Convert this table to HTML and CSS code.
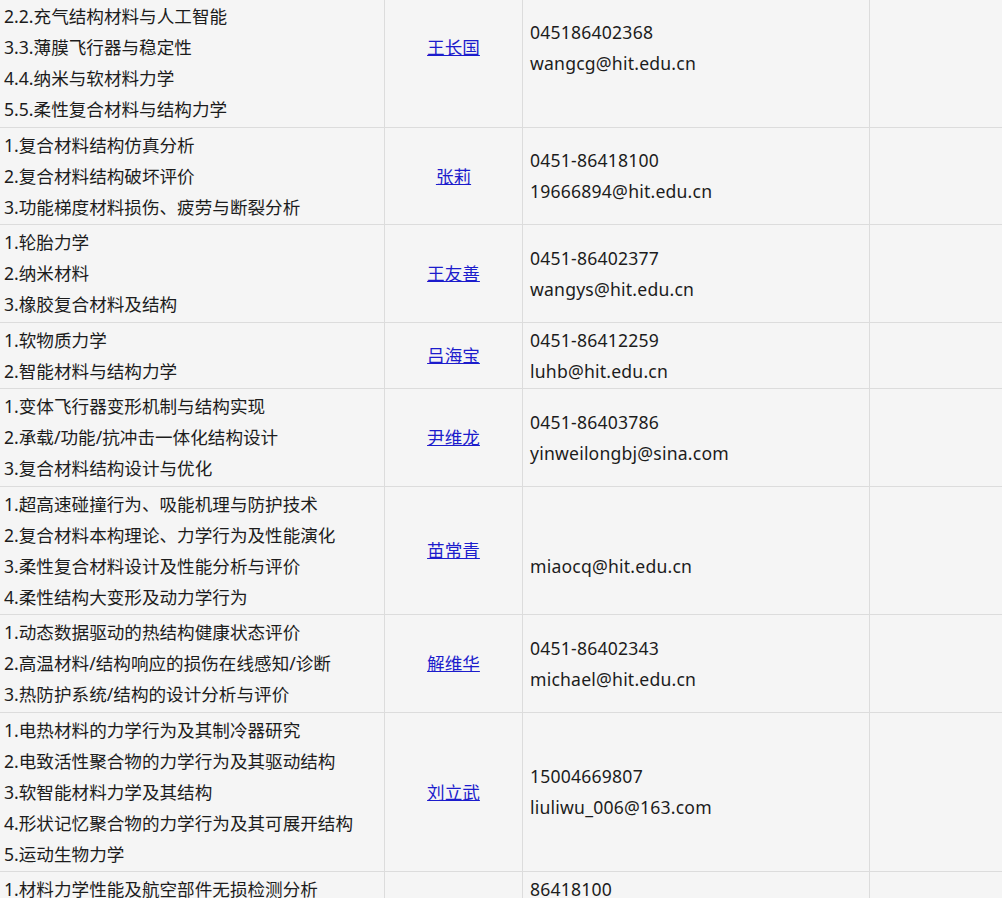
FILE: index.html
```html
<!DOCTYPE html>
<html lang="zh-CN">
<head>
<meta charset="utf-8">
<title>导师列表</title>
<link rel="stylesheet" href="styles.css">
</head>
<body>
<table class="staff">
  <colgroup>
    <col class="c-dir"><col class="c-name"><col class="c-contact"><col class="c-extra">
  </colgroup>
  <tbody>
    <tr>
      <td class="dir"><div>1.1.柔性展开结构力学</div><div>2.2.充气结构材料与人工智能</div><div>3.3.薄膜飞行器与稳定性</div><div>4.4.纳米与软材料力学</div><div>5.5.柔性复合材料与结构力学</div></td>
      <td class="name"><a href="#">王长国</a></td>
      <td class="contact"><div>045186402368</div><div>wangcg@hit.edu.cn</div></td>
      <td class="extra"></td>
    </tr>
    <tr>
      <td class="dir"><div>1.复合材料结构仿真分析</div><div>2.复合材料结构破坏评价</div><div>3.功能梯度材料损伤、疲劳与断裂分析</div></td>
      <td class="name"><a href="#">张莉</a></td>
      <td class="contact"><div>0451-86418100</div><div>19666894@hit.edu.cn</div></td>
      <td class="extra"></td>
    </tr>
    <tr>
      <td class="dir"><div>1.轮胎力学</div><div>2.纳米材料</div><div>3.橡胶复合材料及结构</div></td>
      <td class="name"><a href="#">王友善</a></td>
      <td class="contact"><div>0451-86402377</div><div>wangys@hit.edu.cn</div></td>
      <td class="extra"></td>
    </tr>
    <tr>
      <td class="dir"><div>1.软物质力学</div><div>2.智能材料与结构力学</div></td>
      <td class="name"><a href="#">吕海宝</a></td>
      <td class="contact"><div>0451-86412259</div><div>luhb@hit.edu.cn</div></td>
      <td class="extra"></td>
    </tr>
    <tr>
      <td class="dir"><div>1.变体飞行器变形机制与结构实现</div><div>2.承载/功能/抗冲击一体化结构设计</div><div>3.复合材料结构设计与优化</div></td>
      <td class="name"><a href="#">尹维龙</a></td>
      <td class="contact"><div>0451-86403786</div><div>yinweilongbj@sina.com</div></td>
      <td class="extra"></td>
    </tr>
    <tr>
      <td class="dir"><div>1.超高速碰撞行为、吸能机理与防护技术</div><div>2.复合材料本构理论、力学行为及性能演化</div><div>3.柔性复合材料设计及性能分析与评价</div><div>4.柔性结构大变形及动力学行为</div></td>
      <td class="name"><a href="#">苗常青</a></td>
      <td class="contact"><div>&nbsp;</div><div>miaocq@hit.edu.cn</div></td>
      <td class="extra"></td>
    </tr>
    <tr>
      <td class="dir"><div>1.动态数据驱动的热结构健康状态评价</div><div>2.高温材料/结构响应的损伤在线感知/诊断</div><div>3.热防护系统/结构的设计分析与评价</div></td>
      <td class="name"><a href="#">解维华</a></td>
      <td class="contact"><div>0451-86402343</div><div>michael@hit.edu.cn</div></td>
      <td class="extra"></td>
    </tr>
    <tr>
      <td class="dir"><div>1.电热材料的力学行为及其制冷器研究</div><div>2.电致活性聚合物的力学行为及其驱动结构</div><div>3.软智能材料力学及其结构</div><div>4.形状记忆聚合物的力学行为及其可展开结构</div><div>5.运动生物力学</div></td>
      <td class="name"><a href="#">刘立武</a></td>
      <td class="contact"><div>15004669807</div><div>liuliwu_006@163.com</div></td>
      <td class="extra"></td>
    </tr>
    <tr>
      <td class="dir"><div>1.材料力学性能及航空部件无损检测分析</div><div>2.结构健康监测</div></td>
      <td class="name"><a href="#">王军</a></td>
      <td class="contact"><div>86418100</div><div>wangj@hit.edu.cn</div></td>
      <td class="extra"></td>
    </tr>
  </tbody>
</table>
</body>
</html>
```
FILE: styles.css
```css
html, body {
  margin: 0;
  padding: 0;
  background: #f5f5f5;
  overflow: hidden;
}

body {
  font-family: "Noto Sans", "Noto Sans CJK SC", sans-serif;
  font-size: 17.6px;
  color: #1c1c1c;
}

.staff {
  border-collapse: collapse;
  table-layout: fixed;
  width: 1140px;
  margin-top: -33px;
  margin-left: -1px;
}

.c-dir { width: 385px; }
.c-name { width: 138px; }
.c-contact { width: 347px; }
.c-extra { width: 270px; }

.staff td {
  border: 1px solid #dcdcdc;
  padding: 2px 4px 1.5px;
  line-height: 31px;
  vertical-align: middle;
}

.staff td.dir {
  padding-left: 4px;
  white-space: nowrap;
}

.staff td.name {
  text-align: center;
}

.staff td.contact {
  padding-left: 7px;
  letter-spacing: 0.2px;
}

.name a {
  color: #1c1ccc;
  text-decoration: underline;
}
```
